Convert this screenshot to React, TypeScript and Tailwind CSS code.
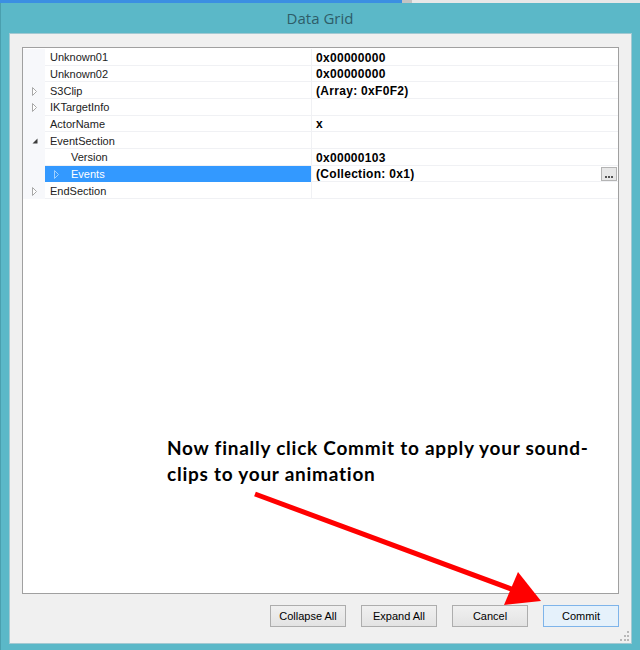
type Row = {
  name: string
  value?: string
  glyph?: "closed" | "open"
  indent?: boolean
  selected?: boolean
  editor?: boolean
}

const rows: Row[] = [
  { name: "Unknown01", value: "0x00000000" },
  { name: "Unknown02", value: "0x00000000" },
  { name: "S3Clip", value: "(Array: 0xF0F2)", glyph: "closed" },
  { name: "IKTargetInfo", glyph: "closed" },
  { name: "ActorName", value: "x" },
  { name: "EventSection", glyph: "open" },
  { name: "Version", value: "0x00000103", indent: true },
  { name: "Events", value: "(Collection: 0x1)", glyph: "closed", indent: true, selected: true, editor: true },
  { name: "EndSection", glyph: "closed" },
]

function Glyph({ kind, light }: { kind: "closed" | "open"; light?: boolean }) {
  if (kind === "open") {
    return (
      <svg width="6" height="6" viewBox="0 0 6 6">
        <polygon points="5.5,0.5 5.5,5.5 0.5,5.5" fill="#3c3c3c" />
      </svg>
    )
  }
  return (
    <svg width="6" height="9" viewBox="0 0 6 9">
      <polygon
        points="0.5,0.5 4.5,4.5 0.5,8.5"
        fill={light ? "#3399ff" : "#ffffff"}
        stroke={light ? "#9fd0ff" : "#a8a8a8"}
      />
    </svg>
  )
}

function GridRow({ row }: { row: Row }) {
  return (
    <div className="flex h-[16.67px]">
      <div className="w-[22px] shrink-0 flex items-center bg-[#f7f8fb] pl-[9px] pt-[1px]">
        {row.glyph && !row.indent && <Glyph kind={row.glyph} />}
      </div>
      <div
        className={
          row.selected
            ? "w-[266px] shrink-0 flex items-center pt-[2px] bg-[#3399ff] text-white"
            : "w-[266px] shrink-0 flex items-center pt-[2px] border-b border-[#f0f1f4] text-[#222]"
        }
      >
        {row.indent ? (
          <div className="w-[26px] shrink-0 flex items-center pl-[9px]">
            {row.glyph && <Glyph kind={row.glyph} light={row.selected} />}
          </div>
        ) : (
          <div className="w-[5px] shrink-0" />
        )}
        <span className="text-[11px] leading-none">{row.name}</span>
      </div>
      <div className="flex-1 flex items-center pt-[2px] border-l border-b border-[#f0f1f4] pl-[4px]">
        <span className="text-[12px] leading-none font-bold tracking-[0.3px] text-black">{row.value}</span>
        {row.editor && (
          <div className="ml-auto mr-[1px] w-[16px] h-[14px] border border-[#b4b4b4] bg-[#e8e8e8] flex items-end justify-center pb-[2px] gap-[1px]">
            <span className="w-[2px] h-[2px] bg-[#555]" />
            <span className="w-[2px] h-[2px] bg-[#555]" />
            <span className="w-[2px] h-[2px] bg-[#555]" />
          </div>
        )}
      </div>
    </div>
  )
}

function DialogButton({ label, primary }: { label: string; primary?: boolean }) {
  return (
    <button
      className={
        primary
          ? "w-[76px] h-[22px] border border-[#7eb4ea] bg-[#e5f1fb] text-[11px] text-black"
          : "w-[76px] h-[22px] border border-[#adadad] bg-gradient-to-b from-[#f0f0f0] to-[#e3e3e3] text-[11px] text-black"
      }
    >
      {label}
    </button>
  )
}

export default function App() {
  return (
    <div className="relative w-[640px] h-[650px] overflow-hidden bg-[#5bb8c8] font-['Liberation_Sans',Arial,sans-serif]">
      {/* edge of the window behind */}
      <div className="flex h-[3px]">
        <div className="w-[402px] bg-[#3b8fe2]" />
        <div className="w-[10px] bg-[#c4c4c4]" />
        <div className="flex-1 bg-[#e8e8e8]" />
      </div>

      <div className="border-l border-[#4a9fae] h-[647px]">
        <div className="h-[30px] flex items-center justify-center pr-[1px] text-[15px] text-[#2e5d68] font-['Open_Sans',sans-serif]">
          Data Grid
        </div>

        <div className="relative ml-[8px] mr-[8px] h-[611px] border border-[#a3c9d2] bg-[#f0f0f0] pt-[13px] px-[12px]">
          <div className="h-[547px] border border-[#a0a0a0] bg-white pt-[1px]">
            {rows.map((row) => (
              <GridRow key={row.name} row={row} />
            ))}
          </div>

          <div className="mt-[11px] flex justify-end gap-[15px]">
            <DialogButton label="Collapse All" />
            <DialogButton label="Expand All" />
            <DialogButton label="Cancel" />
            <DialogButton label="Commit" primary />
          </div>

          {/* size grip */}
          <svg className="absolute right-[1px] bottom-[1px]" width="11" height="11" viewBox="0 0 11 11">
            <g fill="#b8b8b8">
              <rect x="8" y="0" width="2" height="2" />
              <rect x="5" y="4" width="2" height="2" />
              <rect x="8" y="4" width="2" height="2" />
              <rect x="1" y="8" width="2" height="2" />
              <rect x="5" y="8" width="2" height="2" />
              <rect x="8" y="8" width="2" height="2" />
            </g>
          </svg>
        </div>
      </div>

      {/* tutorial note */}
      <div className="absolute left-[167px] top-[435px] text-[19px] leading-[26px] font-bold tracking-[0.75px] text-black font-['Lato',sans-serif]">
        <div>Now finally click Commit to apply your sound-</div>
        <div>clips to your animation</div>
      </div>

      <svg className="absolute left-0 top-0 pointer-events-none" width="640" height="650" viewBox="0 0 640 650">
        <line x1="255" y1="494" x2="514" y2="590" stroke="#ff0000" strokeWidth="5" />
        <polygon points="518,572 504,605 541,601" fill="#ff0000" />
      </svg>
    </div>
  )
}
